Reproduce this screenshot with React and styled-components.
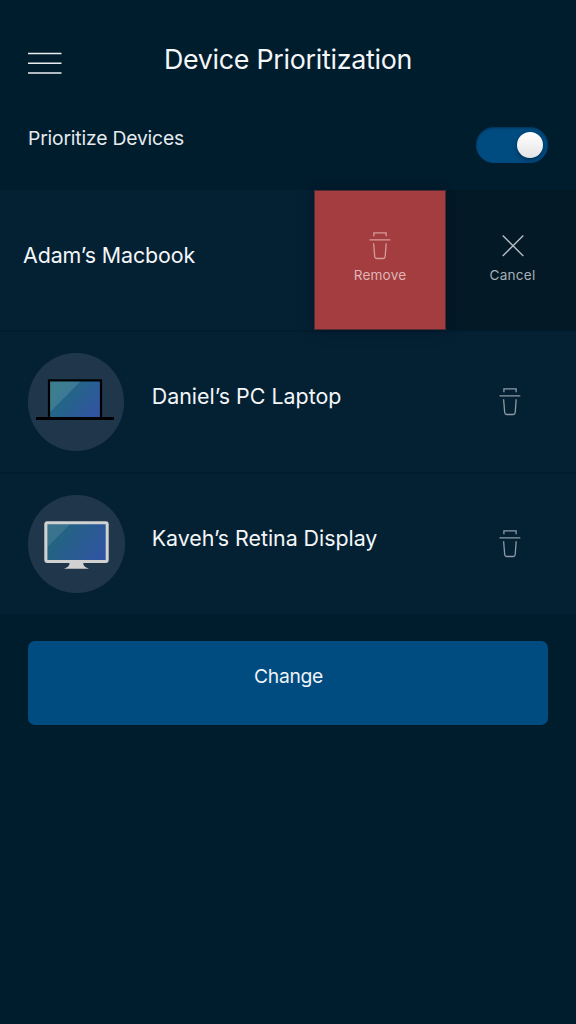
import React from "react";
import styled, { createGlobalStyle } from "styled-components";

const Global = createGlobalStyle`
  * { box-sizing: border-box; }
  body { margin: 0; background: #001d2e; }
  button { border: 0; padding: 0; margin: 0; background: none; font: inherit; color: inherit; cursor: pointer; }
  svg { display: block; }
`;

const Screen = styled.main`
  min-height: 1024px;
  width: 576px;
  overflow: hidden;
  background: #001d2e;
  color: #f4f6f8;
  font-family: Inter, "Liberation Sans", sans-serif;
  font-weight: 400;
`;

const Header = styled.header`
  display: grid;
  grid-template-columns: 100px 1fr 100px;
  height: 110px;
  padding: 0 28px;
`;

const MenuButton = styled.button`
  align-self: start;
  justify-self: start;
  margin-top: 52px;
`;

const Title = styled.h1`
  margin: 42px 0 0;
  justify-self: center;
  white-space: nowrap;
  font-size: 26.8px;
  font-weight: 400;
  line-height: 34px;
  letter-spacing: ${(p) => p.$spacing};
`;

const Setting = styled.section`
  display: flex;
  justify-content: space-between;
  height: 80px;
  padding: 17px 28px 0;
`;

const SettingLabel = styled.span`
  font-size: 19.3px;
  line-height: 23px;
  letter-spacing: ${(p) => p.$spacing};
  color: #e6eaee;
`;

const Switch = styled.button`
  display: flex;
  align-items: center;
  justify-content: flex-end;
  width: 72px;
  height: 36px;
  padding: 0 5px;
  border-radius: 18px;
  background: #004b80;
  box-shadow: inset 0 1px 2px rgba(0, 25, 45, 0.5);
`;

const Knob = styled.span`
  width: 26px;
  height: 26px;
  border-radius: 50%;
  background: linear-gradient(#ffffff, #e4e4e4);
  box-shadow: 0 2px 4px rgba(0, 20, 40, 0.5);
`;

const List = styled.ul`
  display: flex;
  flex-direction: column;
  gap: 2px;
  margin: 0;
  padding: 0;
  list-style: none;
`;

const Row = styled.li`
  display: flex;
  height: 140px;
  background: #042134;
`;

const Avatar = styled.span`
  display: flex;
  flex: none;
  width: ${(p) => p.$width}px;
  height: 98px;
  margin: 21px 0 0 28px;
  border-radius: 50%;
  background: #20374b;
`;

const Name = styled.span`
  flex: 1;
  margin: ${(p) => p.$margin};
  font-size: 21.4px;
  line-height: 26px;
  white-space: nowrap;
  letter-spacing: ${(p) => p.$spacing};
`;

const DeleteButton = styled.button`
  align-self: start;
  margin: 55px 55px 0 0;
  color: #8c9ba6;
`;

const Action = styled.button`
  display: flex;
  flex: none;
  flex-direction: column;
  align-items: center;
  width: 130px;
  padding: 41px 0 0 3px;
  color: #a8b0b6;
  background: #031926;
`;

const RemoveAction = styled(Action)`
  z-index: 1;
  width: 132px;
  padding: 41px 0 0;
  color: #d99a9b;
  background: #a33d3f;
  box-shadow: 0 0 14px rgba(0, 12, 28, 0.45), inset 0 0 0 1px rgba(3, 25, 38, 0.5);
`;

const ActionLabel = styled.span`
  margin-top: 6px;
  font-size: 13.6px;
  line-height: 18px;
  letter-spacing: ${(p) => p.$spacing};
  color: ${(p) => p.$color};
`;

const ChangeButton = styled.button`
  display: block;
  width: 520px;
  height: 84px;
  margin: 27px 28px 0;
  padding: 0 0 14px 1px;
  border-radius: 7px;
  background: #004b80;
  color: #eef3f7;
  font-size: 19.3px;
  letter-spacing: ${(p) => p.$spacing};
`;

const MenuIcon = () => (
  <svg width="34" height="23" viewBox="0 0 34 23" aria-hidden="true">
    <path d="M0 1.5H33.5M0 11.3H33.5M0 21H33.5" stroke="#e9edf0" strokeWidth="1.5" />
  </svg>
);

const TrashIcon = () => (
  <svg width="22" height="29" viewBox="0 0 22 29" fill="none" stroke="currentColor" strokeWidth="1.3" aria-hidden="true">
    <path d="M.5 8.9H21.3M4.9 5.2V1.9H17.1V5.2M4.6 12.2L5.7 25.5Q5.9 27.5 7.7 27.5H14.2Q16 27.5 16.2 25.5L17.2 12.2" />
  </svg>
);

const CloseIcon = () => (
  <svg width="22" height="29" viewBox="0 0 22 29" fill="none" stroke="#b6bdc2" strokeWidth="1.4" aria-hidden="true">
    <path d="M.7 4.5L21.3 25M21.3 4.5L.7 25" />
  </svg>
);

const LaptopIcon = () => (
  <svg width="96" height="98" viewBox="0 0 96 98" aria-hidden="true">
    <defs>
      <linearGradient id="laptop" gradientUnits="userSpaceOnUse" x1="27" y1="34" x2="68" y2="66">
        <stop offset=".1" stopColor="#1f6a80" />
        <stop offset="1" stopColor="#3353a4" />
      </linearGradient>
    </defs>
    <path d="M21 27.3H73V65H21Z" fill="url(#laptop)" stroke="#000" strokeWidth="2.2" />
    <path d="M22.1 28.4H52.5L22.1 59Z" fill="#fff" fillOpacity=".13" />
    <path d="M8 64H86V67H8Z" />
  </svg>
);

const MonitorIcon = () => (
  <svg width="97" height="98" viewBox="0 0 97 98" aria-hidden="true">
    <defs>
      <linearGradient id="monitor" gradientUnits="userSpaceOnUse" x1="22" y1="30" x2="77" y2="64">
        <stop offset=".1" stopColor="#22657f" />
        <stop offset="1" stopColor="#3053a3" />
      </linearGradient>
    </defs>
    <rect x="16.3" y="26.3" width="64.4" height="41.8" rx="3" fill="#d1d1d2" />
    <path d="M19.4 29.3H77.7V65H19.4Z" fill="url(#monitor)" />
    <path d="M19.4 29.3H42L19.4 52Z" fill="#fff" fillOpacity=".1" />
    <path d="M41.5 68H55.3C55.3 71.5 58 72.5 61 73.8H36C39 72.5 41.5 71.5 41.5 68Z" fill="#d1d1d2" />
  </svg>
);

export default function App() {
  return (
    <Screen>
      <Global />
      <Header>
        <MenuButton aria-label="Menu"><MenuIcon /></MenuButton>
        <Title $spacing="-0.27px">Device Prioritization</Title>
      </Header>
      <Setting>
        <SettingLabel $spacing="-0.17px">Prioritize Devices</SettingLabel>
        <Switch role="switch" aria-checked="true" aria-label="Prioritize Devices"><Knob /></Switch>
      </Setting>
      <List>
        <Row>
          <Name $margin="52px 0 0 23px" $spacing="-0.09px">Adam’s Macbook</Name>
          <RemoveAction>
            <TrashIcon />
            <ActionLabel $spacing="0.15px" $color="#e0b4b5">Remove</ActionLabel>
          </RemoveAction>
          <Action>
            <CloseIcon />
            <ActionLabel $spacing="0.2px" $color="#a8b0b6">Cancel</ActionLabel>
          </Action>
        </Row>
        <Row>
          <Avatar $width={96}><LaptopIcon /></Avatar>
          <Name $margin="51px 0 0 27.7px" $spacing="0.02px">Daniel’s PC Laptop</Name>
          <DeleteButton aria-label="Remove Daniel’s PC Laptop"><TrashIcon /></DeleteButton>
        </Row>
        <Row>
          <Avatar $width={97}><MonitorIcon /></Avatar>
          <Name $margin="51px 0 0 26.7px" $spacing="-0.03px">Kaveh’s Retina Display</Name>
          <DeleteButton aria-label="Remove Kaveh’s Retina Display"><TrashIcon /></DeleteButton>
        </Row>
      </List>
      <ChangeButton $spacing="-0.3px">Change</ChangeButton>
    </Screen>
  );
}
